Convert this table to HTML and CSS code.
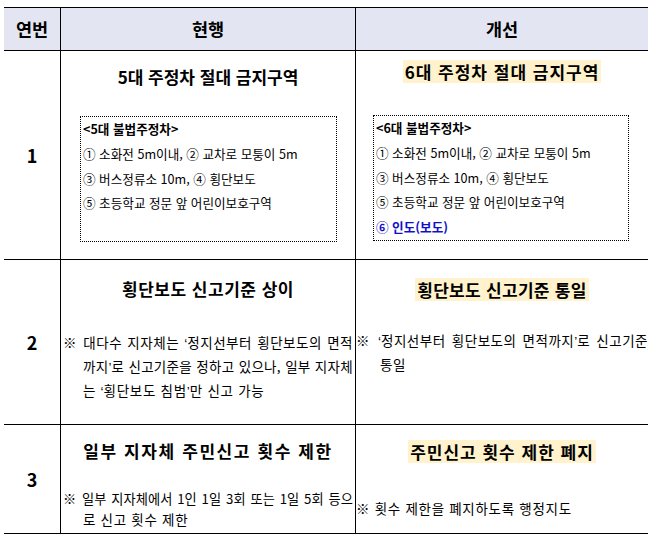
FILE: index.html
```html
<!DOCTYPE html>
<html lang="ko">
<head>
<meta charset="utf-8">
<link rel="stylesheet" href="styles.css">
</head>
<body>
<div class="tbl">
  <div class="cell head c1">연번</div>
  <div class="cell head c2">현행</div>
  <div class="cell head c3">개선</div>

  <div class="cell num c1">1</div>
  <div class="cell c2 r1">
    <div class="title t-r1l">5대 주정차 절대 금지구역</div>
    <div class="box box-l">
      <div class="bl b">&lt;5대 불법주정차&gt;</div>
      <div class="bl">① 소화전 5m이내, ② 교차로 모퉁이 5m</div>
      <div class="bl">③ 버스정류소 10m, ④ 횡단보도</div>
      <div class="bl">⑤ 초등학교 정문 앞 어린이보호구역</div>
    </div>
  </div>
  <div class="cell c3 r1">
    <div class="title t-r1r"><span class="hl sp-a">6대 주정차 절대 금지구역</span></div>
    <div class="box box-r">
      <div class="bl b">&lt;6대 불법주정차&gt;</div>
      <div class="bl">① 소화전 5m이내, ② 교차로 모퉁이 5m</div>
      <div class="bl">③ 버스정류소 10m, ④ 횡단보도</div>
      <div class="bl">⑤ 초등학교 정문 앞 어린이보호구역</div>
      <div class="bl b blue">⑥ 인도(보도)</div>
    </div>
  </div>

  <div class="cell num c1">2</div>
  <div class="cell c2 r2">
    <div class="title t-r2"><span class="sp-b">횡단보도 신고기준 상이</span></div>
    <div class="note n-r2l">
      <span class="ln j ls6">※ 대다수 지자체는 <span class="q">‘</span>정지선부터 횡단보도의 면적</span>
      <span class="ln j ind ls4">까지<span class="q">’</span>로 신고기준을 정하고 있으나, 일부 지자체</span>
      <span class="ln ind">는 <span class="q">‘</span>횡단보도 침범<span class="q">’</span>만 신고 가능</span>
    </div>
  </div>
  <div class="cell c3 r2">
    <div class="title t-r2"><span class="hl sp-c">횡단보도 신고기준 통일</span></div>
    <div class="note n-r2r">
      <span class="ln j ls6">※ <span class="q">‘</span>정지선부터 횡단보도의 면적까지<span class="q">’</span>로 신고기준</span>
      <span class="ln ind2">통일</span>
    </div>
  </div>

  <div class="cell num c1 last">3</div>
  <div class="cell c2 r3 last">
    <div class="title t-r3"><span class="sp-d">일부 지자체 주민신고 횟수 제한</span></div>
    <div class="note n-r3l">
      <span class="ln j ls2">※ 일부 지자체에서 1인 1일 3회 또는 1일 5회 등으</span>
      <span class="ln ind">로 신고 횟수 제한</span>
    </div>
  </div>
  <div class="cell c3 r3 last">
    <div class="title t-r3"><span class="hl sp-e">주민신고 횟수 제한 폐지</span></div>
    <div class="note n-r3r">
      <span class="ln">※ 횟수 제한을 폐지하도록 행정지도</span>
    </div>
  </div>
</div>
</body>
</html>
```

FILE: styles.css
```css
* { box-sizing: border-box; }
html, body { margin: 0; padding: 0; background: #fff; }
body {
  font-family: "Noto Sans CJK KR", "Noto Sans", sans-serif;
  color: #000;
}
.tbl {
  margin: 7px 0 0 4px;
  width: 644px;
  display: grid;
  grid-template-columns: 57px 295px 292px;
  grid-template-rows: 43px 209px 165px 109px;
  border-top: 1px solid #000;
}
.cell {
  border-bottom: 1px solid #000;
  min-width: 0;
}
.c1, .c2 { border-right: 1px solid #000; }
.head {
  background: #e3e6f2;
  font-weight: bold;
  font-size: 17.5px;
  display: flex;
  align-items: center;
  justify-content: center;
  padding-bottom: 2px;
}
.num {
  font-weight: bold;
  font-size: 18px;
  display: flex;
  align-items: center;
  justify-content: center;
}
.title {
  font-weight: bold;
  font-size: 17px;
  text-align: center;
  line-height: 22px;
  white-space: nowrap;
}
.t-r1l { padding-top: 15px; height: 37px; }
.t-r1r { padding-top: 9px; height: 32px; }
.t-r2 { padding-top: 18px; height: 40px; }
.t-r3 { padding-top: 15px; height: 37px; }
.hl {
  display: inline-block;
  background: #fff2cc;
  line-height: 23px;
  padding: 0 2px;
}
.sp-a { letter-spacing: 1px; }
.sp-b { letter-spacing: 0.5px; }
.sp-c { letter-spacing: 0.3px; }
.sp-d { letter-spacing: 1.6px; }
.sp-e { letter-spacing: 1px; }

.box {
  border: 1px dotted #000;
  height: 126px;
  padding: 0 2px;
  font-size: 12.6px;
  line-height: 24.8px;
  white-space: nowrap;
}
.box-l { margin: 28px 0 0 19px; width: 257px; }
.box-r { margin: 32px 0 0 17px; width: 256px; }
.bl.b { font-weight: bold; }
.blue { color: #1010c8; }

.note {
  font-size: 13.5px;
  letter-spacing: 0.7px;
  line-height: 22px;
  padding: 0 2px 0 2px;
  white-space: nowrap;
}
.q { font-family: "Liberation Sans", sans-serif; letter-spacing: 0; }
.ln { display: block; }
.j {
  text-align: justify;
  text-align-last: justify;
  white-space: normal;
  overflow: hidden;
}
.ls6 { letter-spacing: 0.5px; }
.ls4 { letter-spacing: 0.3px; }
.ls2 { letter-spacing: 0.1px; }
.ind { padding-left: 20px; }
.ind2 { padding-left: 24px; }
.n-r2l { margin-top: 31px; }
.n-r2r { margin-top: 29px; padding-left: 0; padding-right: 0; }
.n-r3l { margin-top: 27px; line-height: 20px; }
.n-r3l .j { font-size: 13.2px; }
.n-r3r { margin-top: 36px; line-height: 20px; padding-left: 0; }
```
